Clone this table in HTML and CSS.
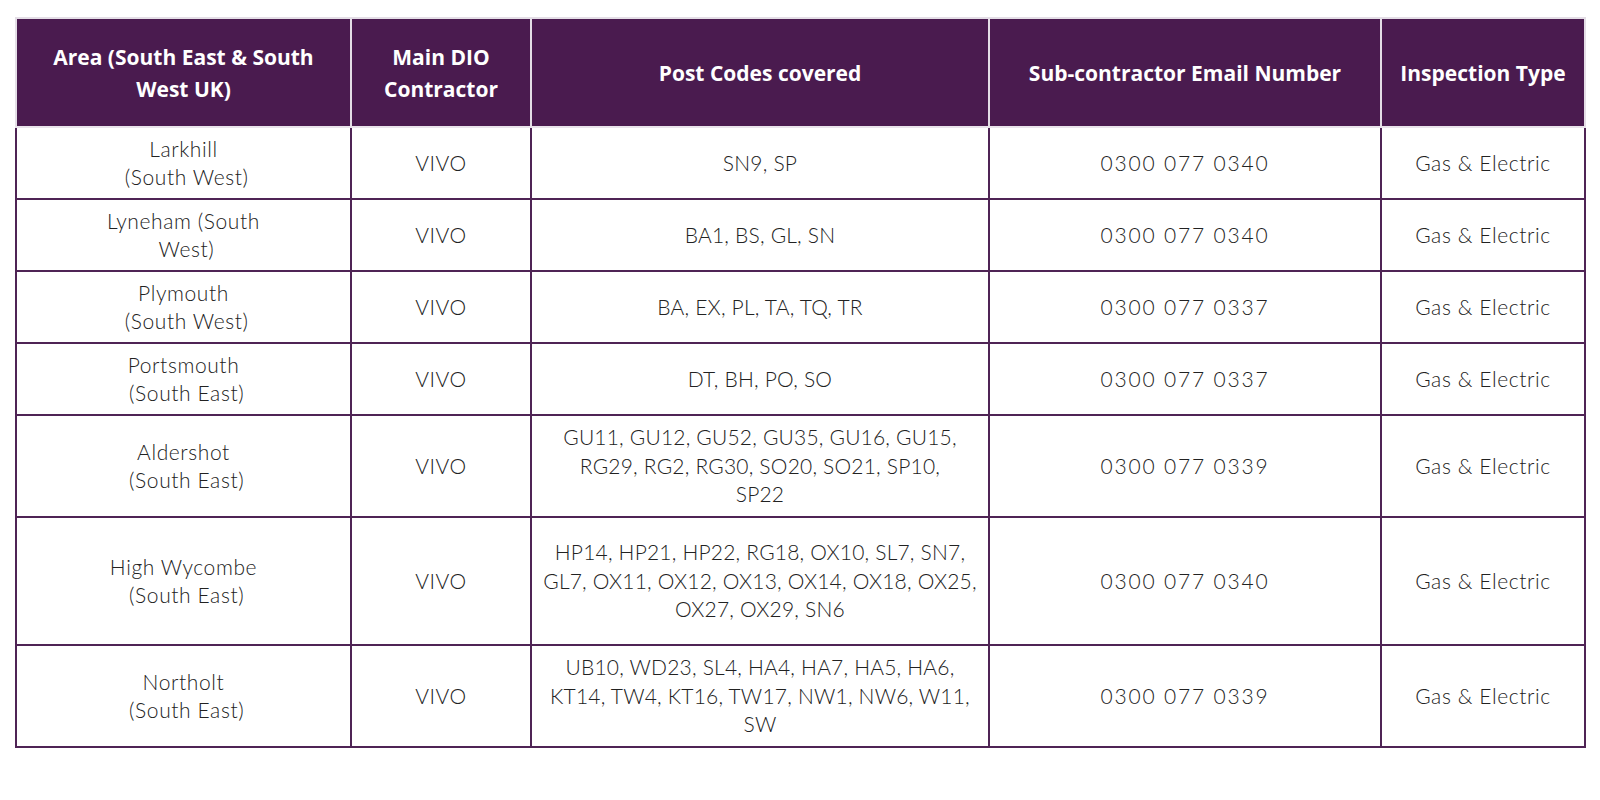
FILE: index.html
```html
<!DOCTYPE html>
<html lang="en">
<head>
<meta charset="utf-8">
<title>DIO Contractors</title>
<link rel="stylesheet" href="styles.css">
</head>
<body>
<table class="grid">
  <colgroup>
    <col class="c-area">
    <col class="c-main">
    <col class="c-post">
    <col class="c-num">
    <col class="c-type">
  </colgroup>
  <thead>
    <tr class="head">
      <th>Area (South East &amp; South<br>West UK)</th>
      <th>Main DIO<br>Contractor</th>
      <th>Post Codes covered</th>
      <th>Sub-contractor Email Number</th>
      <th>Inspection Type</th>
    </tr>
  </thead>
  <tbody>
    <tr class="r1">
      <td>Larkhill<br>&nbsp;(South West)</td>
      <td>VIVO</td>
      <td class="post">SN9, SP</td>
      <td class="num">0300 077 0340</td>
      <td>Gas &amp; Electric</td>
    </tr>
    <tr class="r1">
      <td>Lyneham (South<br>&nbsp;West)</td>
      <td>VIVO</td>
      <td class="post">BA1, BS, GL, SN</td>
      <td class="num">0300 077 0340</td>
      <td>Gas &amp; Electric</td>
    </tr>
    <tr class="r1">
      <td>Plymouth<br>&nbsp;(South West)</td>
      <td>VIVO</td>
      <td class="post">BA, EX, PL, TA, TQ, TR</td>
      <td class="num">0300 077 0337</td>
      <td>Gas &amp; Electric</td>
    </tr>
    <tr class="r1">
      <td>Portsmouth<br>&nbsp;(South East)</td>
      <td>VIVO</td>
      <td class="post">DT, BH, PO, SO</td>
      <td class="num">0300 077 0337</td>
      <td>Gas &amp; Electric</td>
    </tr>
    <tr class="r3">
      <td>Aldershot<br>&nbsp;(South East)</td>
      <td>VIVO</td>
      <td class="post">GU11, GU12, GU52, GU35, GU16, GU15,<br>RG29, RG2, RG30, SO20, SO21, SP10,<br>SP22</td>
      <td class="num">0300 077 0339</td>
      <td>Gas &amp; Electric</td>
    </tr>
    <tr class="r4">
      <td>High Wycombe<br>&nbsp;(South East)</td>
      <td>VIVO</td>
      <td class="post">HP14, HP21, HP22, RG18, OX10, SL7, SN7,<br>GL7, OX11, OX12, OX13, OX14, OX18, OX25,<br>OX27, OX29, SN6</td>
      <td class="num">0300 077 0340</td>
      <td>Gas &amp; Electric</td>
    </tr>
    <tr class="r5">
      <td>Northolt<br>&nbsp;(South East)</td>
      <td>VIVO</td>
      <td class="post">UB10, WD23, SL4, HA4, HA7, HA5, HA6,<br>KT14, TW4, KT16, TW17, NW1, NW6, W11,<br>SW</td>
      <td class="num">0300 077 0339</td>
      <td>Gas &amp; Electric</td>
    </tr>
  </tbody>
</table>
</body>
</html>
```

FILE: styles.css
```css
html, body {
  margin: 0;
  padding: 0;
  background: #ffffff;
}

body {
  padding: 17px 0 0 15px;
}

.grid {
  border-collapse: collapse;
  table-layout: fixed;
  width: 1569px;
  font-family: "Lato", "Open Sans", sans-serif;
}

.c-area { width: 335px; }
.c-main { width: 180px; }
.c-post { width: 458px; }
.c-num  { width: 392px; }
.c-type { width: 204px; }

.head th {
  height: 107px;
  background: #4a1b4f;
  color: #ffffff;
  font-family: "Open Sans", "Lato", sans-serif;
  font-weight: 700;
  font-size: 21px;
  line-height: 32px;
  text-align: center;
  vertical-align: middle;
  padding: 0 6px;
  border: 2px solid #e4dee6;
  border-bottom-color: #e9e4eb;
}

tbody td {
  color: #222222;
  font-weight: 300;
  font-size: 21px;
  line-height: 28.5px;
  letter-spacing: 0.6px;
  text-align: center;
  vertical-align: middle;
  padding: 0 6px;
  border: 2px solid #4f2455;
}

tbody td.post {
  white-space: nowrap;
  letter-spacing: 0.2px;
  padding: 0 2px;
}

tbody td.num {
  letter-spacing: 1.8px;
}

.r1 td { height: 70px; }
.r3 td { height: 100px; }
.r4 td { height: 126px; }
.r5 td { height: 100px; }
```
